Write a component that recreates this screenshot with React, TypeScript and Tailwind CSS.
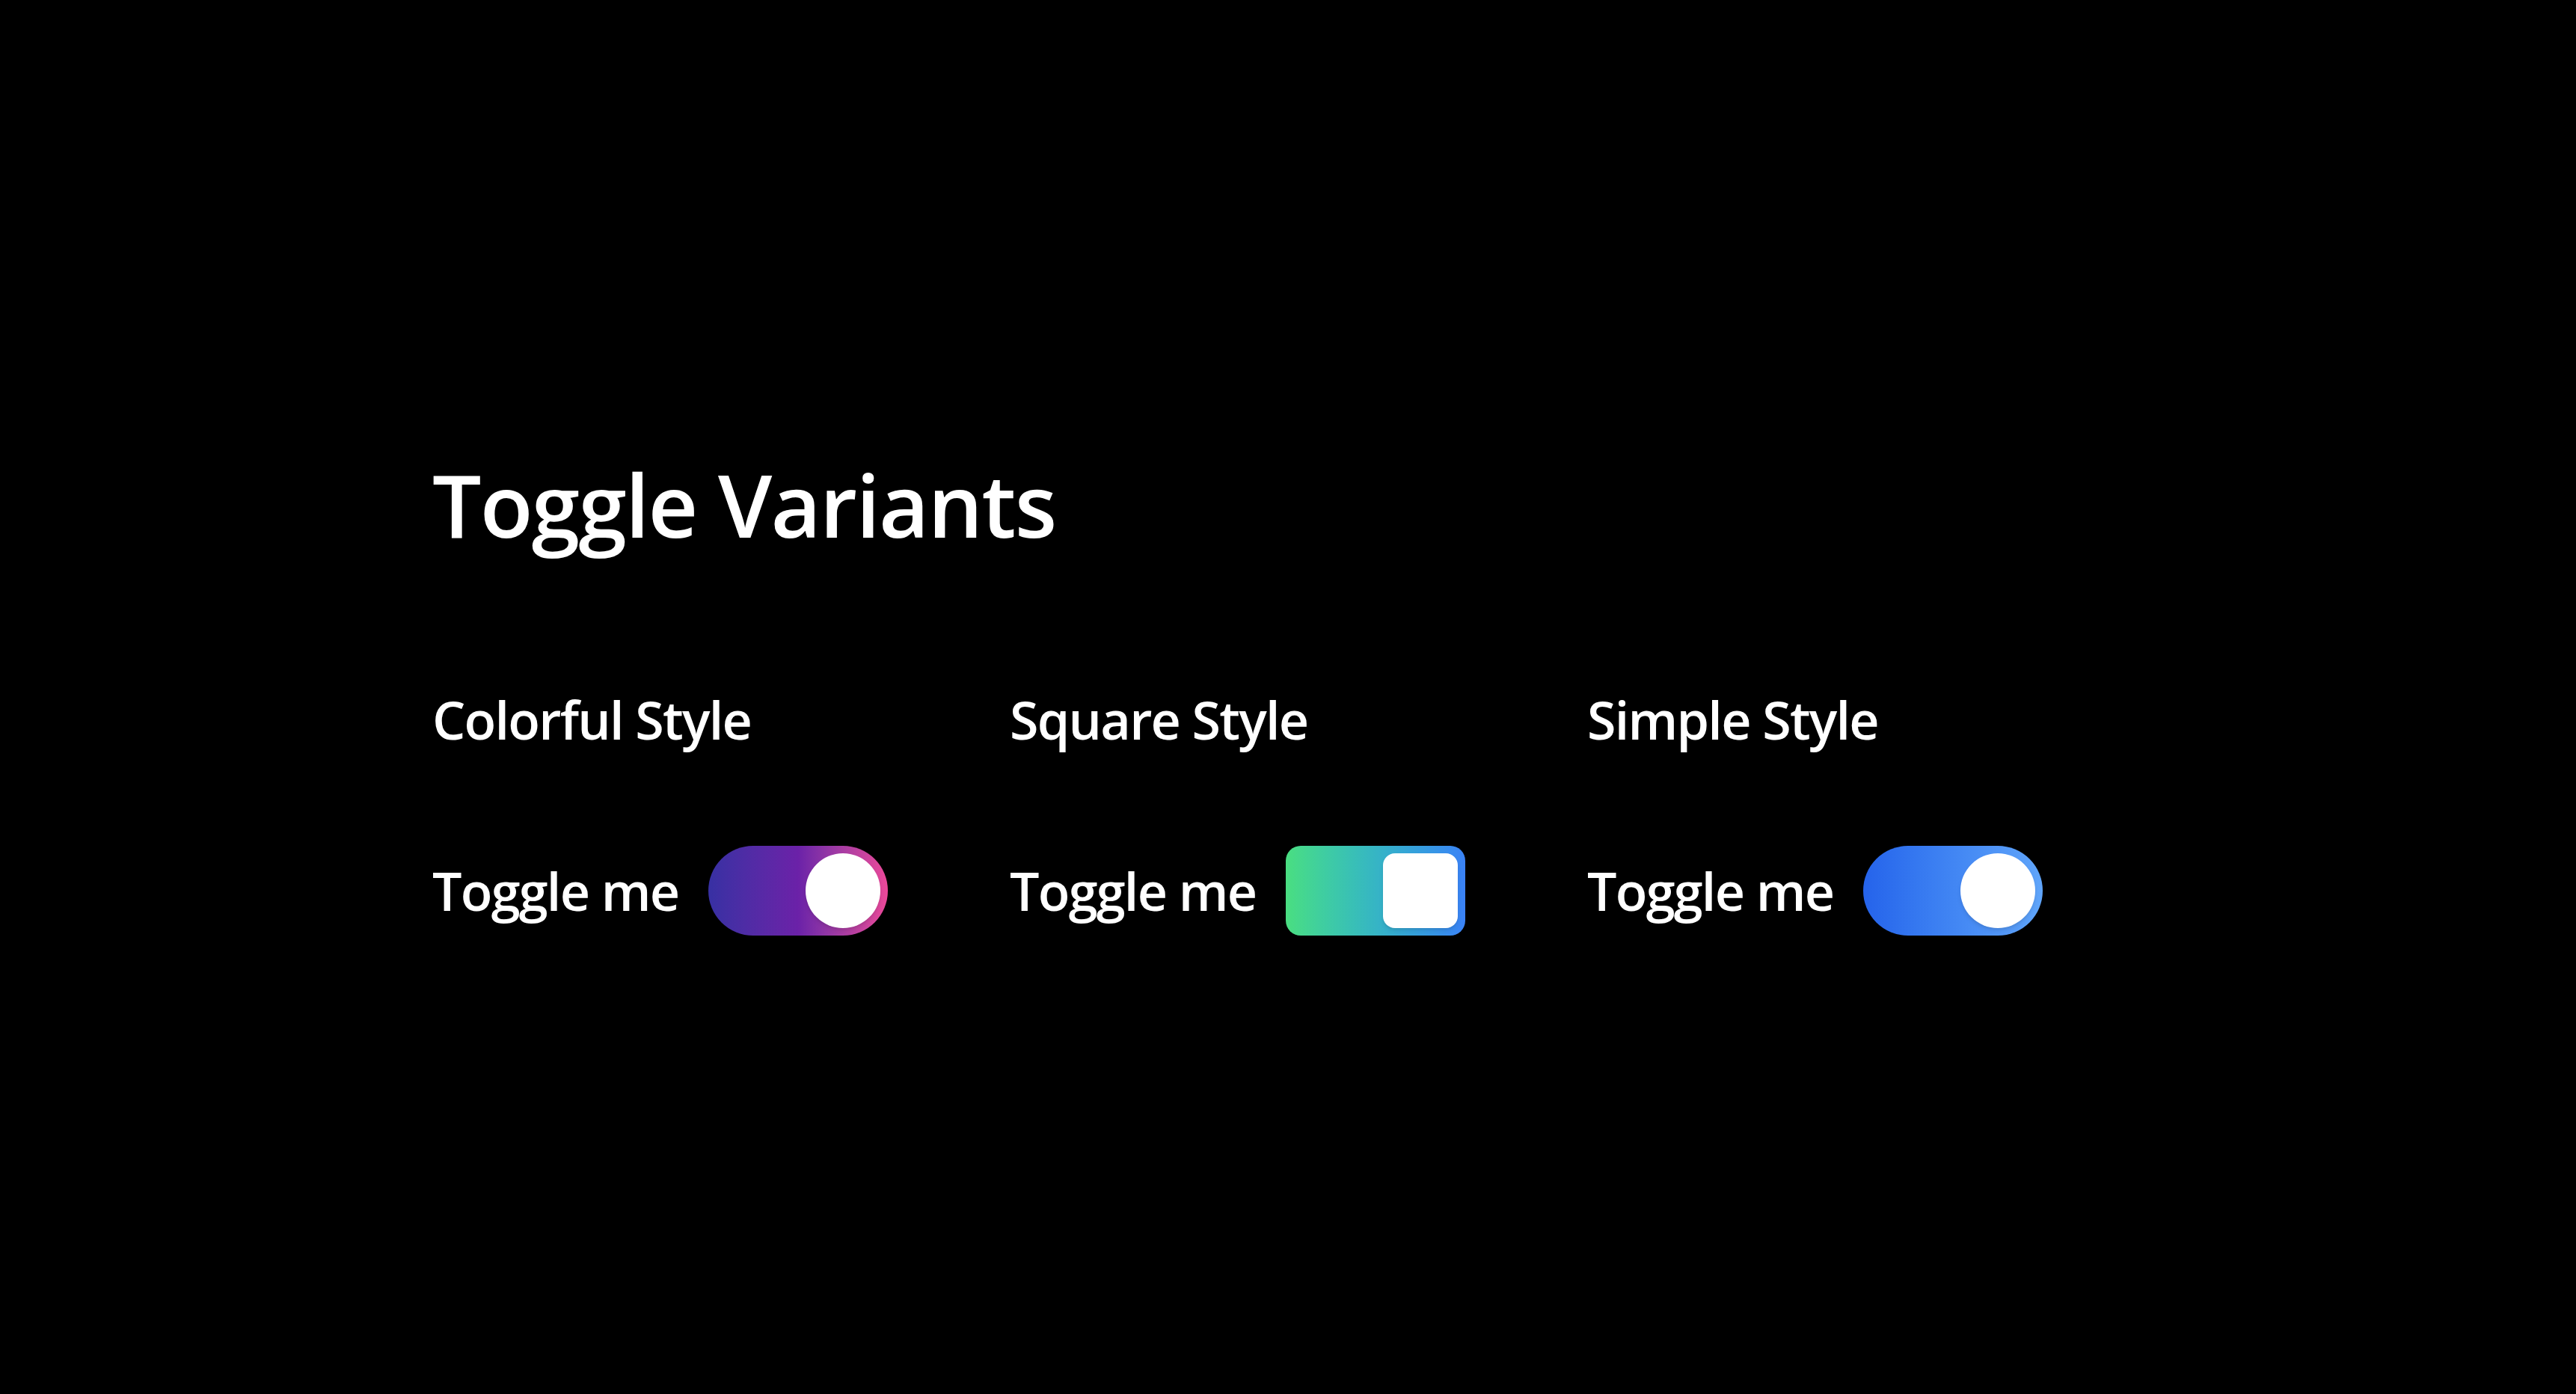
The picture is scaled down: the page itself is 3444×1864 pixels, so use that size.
import React, { useState } from 'react';

type Variant = 'colorful' | 'square' | 'simple';

const trackStyles: Record<Variant, string> = {
  colorful: 'rounded-full bg-linear-to-r from-[#3730a3] via-[#6b21a8] to-[#ec4899]',
  square: 'rounded-[20px] bg-linear-to-r from-[#4ade80] to-[#3b82f6]',
  simple: 'rounded-full bg-linear-to-r from-[#2563eb] to-[#60a5fa]',
};

const knobStyles: Record<Variant, string> = {
  colorful: 'rounded-full',
  square: 'rounded-[16px]',
  simple: 'rounded-full',
};

const Toggle = ({ variant }: { variant: Variant }) => {
  const [on, setOn] = useState(true);

  return (
    <label className="flex items-center gap-[40px] cursor-pointer select-none">
      <span className="text-[70px] leading-[100px] tracking-[-0.025em] font-semibold text-white">Toggle me</span>
      <button
        type="button"
        onClick={() => setOn(!on)}
        className={`flex h-[120px] w-[240px] items-center p-[10px] transition-all ${trackStyles[variant]}`}
      >
        <span
          className={`block h-[100px] w-[100px] bg-white shadow-md transition-transform ${knobStyles[variant]} ${
            on ? 'translate-x-[120px]' : 'translate-x-0'
          }`}
        />
      </button>
    </label>
  );
};

const App = () => {
  const variants: { title: string; variant: Variant }[] = [
    { title: 'Colorful Style', variant: 'colorful' },
    { title: 'Square Style', variant: 'square' },
    { title: 'Simple Style', variant: 'simple' },
  ];

  return (
    <div className="min-h-screen bg-black flex items-center pb-[9px] font-['Open_Sans',sans-serif]">
      <div className="w-[2288px] mx-auto">
        {/* Header */}
        <h2 className="text-[116px] leading-[140px] tracking-[-0.015em] font-semibold text-white">Toggle Variants</h2>

        <div className="mt-[168px] grid grid-cols-3 gap-x-[28px]">
          {variants.map((v) => (
            <div key={v.variant}>
              <h3 className="text-[70px] leading-[100px] tracking-[-0.025em] font-semibold text-white">{v.title}</h3>
              <div className="mt-[119px]">
                <Toggle variant={v.variant} />
              </div>
            </div>
          ))}
        </div>
      </div>
    </div>
  );
};

export default App;
